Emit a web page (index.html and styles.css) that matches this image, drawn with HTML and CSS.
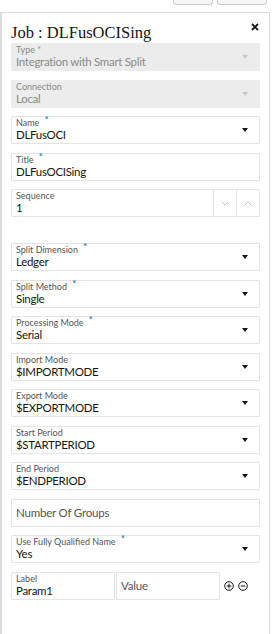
FILE: index.html
```html
<!DOCTYPE html>
<html lang="en">
<head>
    <meta charset="UTF-8">
    <meta name="viewport" content="width=device-width, initial-scale=1.0">
    <title>Job : DLFusOCISing</title>
    <link rel="stylesheet" href="styles.css">
</head>
<body>

<!-- toolbar buttons peeking from above the panel -->
<div class="toolbar">
    <span class="tool-btn small"></span>
    <span class="tool-btn wide"></span>
</div>

<div class="panel">
    <div class="panel-head">
        <h1>Job : DLFusOCISing</h1>
        <svg class="close" width="8" height="8" viewBox="0 0 8 8"><path d="M1 1 L7 7 M7 1 L1 7" stroke="#161513" stroke-width="1.8"/></svg>
    </div>

    <div class="field disabled">
        <div class="text">
            <span class="label">Type *</span>
            <span class="value">Integration with Smart Split</span>
        </div>
        <span class="arrow"></span>
    </div>

    <div class="field disabled">
        <div class="text">
            <span class="label">Connection</span>
            <span class="value">Local</span>
        </div>
        <span class="arrow"></span>
    </div>

    <div class="field">
        <div class="text">
            <span class="label">Name <b class="req">*</b></span>
            <span class="value">DLFusOCI</span>
        </div>
        <span class="arrow"></span>
    </div>

    <div class="field">
        <div class="text">
            <span class="label">Title <b class="req">*</b></span>
            <span class="value">DLFusOCISing</span>
        </div>
    </div>

    <div class="field spin">
        <div class="text">
            <span class="label">Sequence</span>
            <span class="value">1</span>
        </div>
        <span class="spin-btn">
            <svg width="8" height="5" viewBox="0 0 8 5"><path d="M0.5 0.5 L4 4 L7.5 0.5" fill="none" stroke="#c4c4c4" stroke-width="1"/></svg>
        </span>
        <span class="spin-btn">
            <svg width="8" height="5" viewBox="0 0 8 5"><path d="M0.5 4.5 L4 1 L7.5 4.5" fill="none" stroke="#c4c4c4" stroke-width="1"/></svg>
        </span>
    </div>

    <div class="spacer"></div>

    <div class="field">
        <div class="text">
            <span class="label">Split Dimension <b class="req">*</b></span>
            <span class="value">Ledger</span>
        </div>
        <span class="arrow"></span>
    </div>

    <div class="field">
        <div class="text">
            <span class="label">Split Method <b class="req">*</b></span>
            <span class="value">Single</span>
        </div>
        <span class="arrow"></span>
    </div>

    <div class="field">
        <div class="text">
            <span class="label">Processing Mode <b class="req">*</b></span>
            <span class="value">Serial</span>
        </div>
        <span class="arrow"></span>
    </div>

    <div class="field">
        <div class="text">
            <span class="label">Import Mode</span>
            <span class="value">$IMPORTMODE</span>
        </div>
        <span class="arrow"></span>
    </div>

    <div class="field">
        <div class="text">
            <span class="label">Export Mode</span>
            <span class="value">$EXPORTMODE</span>
        </div>
        <span class="arrow"></span>
    </div>

    <div class="field">
        <div class="text">
            <span class="label">Start Period</span>
            <span class="value">$STARTPERIOD</span>
        </div>
        <span class="arrow"></span>
    </div>

    <div class="field">
        <div class="text">
            <span class="label">End Period</span>
            <span class="value">$ENDPERIOD</span>
        </div>
        <span class="arrow"></span>
    </div>

    <div class="field">
        <span class="placeholder">Number Of Groups</span>
    </div>

    <div class="field">
        <div class="text">
            <span class="label">Use Fully Qualified Name <b class="req">*</b></span>
            <span class="value">Yes</span>
        </div>
        <span class="arrow"></span>
    </div>

    <div class="param-row">
        <div class="field param">
            <div class="text">
                <span class="label">Label</span>
                <span class="value">Param1</span>
            </div>
        </div>
        <div class="field param">
            <span class="placeholder">Value</span>
        </div>
        <div class="param-icons">
            <svg width="10" height="10" viewBox="0 0 10 10"><circle cx="5" cy="5" r="4.3" fill="none" stroke="#161513" stroke-width="1"/><path d="M2.7 5 H7.3 M5 2.7 V7.3" stroke="#161513" stroke-width="1"/></svg>
            <svg width="10" height="10" viewBox="0 0 10 10"><circle cx="5" cy="5" r="4.3" fill="none" stroke="#161513" stroke-width="1"/><path d="M2.7 5 H7.3" stroke="#161513" stroke-width="1"/></svg>
        </div>
    </div>
</div>

</body>
</html>
```

FILE: styles.css
```css
body {
    margin: 0;
    background-color: #ffffff;
    font-family: Lato, "Noto Sans", Arial, sans-serif;
    color: #161513;
    height: 634px;
    overflow: hidden;
}

/* buttons that stick out above the panel */
.toolbar {
    height: 12px;
    display: flex;
    justify-content: flex-end;
    gap: 4px;
    padding-right: 7px;
}

.tool-btn {
    display: block;
    height: 4px;
    border: 1px solid #c8c8c8;
    border-top: none;
    border-radius: 0 0 4px 4px;
    background-color: #f6f6f6;
}

.tool-btn.small {
    width: 38px;
}

.tool-btn.wide {
    width: 48px;
}

.panel {
    width: 249px;
    height: 640px;
    padding: 0 9px 0 9px;
    border: 1px solid #dcdcdc;
    border-left-width: 2px;
    background-color: #ffffff;
}

.panel-head {
    display: flex;
    align-items: flex-start;
    justify-content: space-between;
    height: 30px;
}

h1 {
    margin: 10px 0 0 0;
    font-family: "Liberation Serif", "DejaVu Serif", serif;
    font-weight: normal;
    font-size: 16.5px;
    line-height: 19px;
}

.close {
    margin: 10px 1px 0 0;
}

.field {
    box-sizing: border-box;
    height: 28px;
    margin-bottom: 8.5px;
    border: 1px solid #e4e4e4;
    border-radius: 1px;
    display: flex;
    align-items: center;
    padding-left: 4px;
    background-color: #ffffff;
}

.field.disabled {
    background-color: #ececec;
    border-color: #ececec;
}

.text {
    flex: 1;
    display: flex;
    flex-direction: column;
}

.label {
    font-size: 9px;
    line-height: 10px;
    color: #555555;
    margin-top: -1px;
}

.value {
    font-size: 11.5px;
    line-height: 13px;
    letter-spacing: -0.3px;
    color: #161513;
}

.disabled .label,
.disabled .value {
    color: #8a8a8a;
}

.req {
    color: #227bbf;
    font-weight: bold;
    font-size: 9px;
    position: relative;
    top: -3px;
    margin-left: 3px;
}

.placeholder {
    font-size: 11.5px;
    letter-spacing: -0.2px;
    color: #555555;
}

.arrow {
    width: 0;
    height: 0;
    border-left: 3.5px solid transparent;
    border-right: 3.5px solid transparent;
    border-top: 4px solid #161513;
    margin-right: 11px;
}

.disabled .arrow {
    border-top-color: #c8c8c8;
}

.spin {
    padding-right: 0;
}

.spin-btn {
    width: 22px;
    height: 100%;
    border-left: 1px solid #e4e4e4;
    display: flex;
    align-items: center;
    justify-content: center;
}

.spacer {
    height: 17.5px;
}

.param-row {
    display: flex;
    align-items: center;
}

.field.param {
    width: 104px;
    margin-bottom: 0;
    margin-right: 1px;
}

.param-icons {
    display: flex;
    gap: 4px;
    margin-left: 3px;
}
```
